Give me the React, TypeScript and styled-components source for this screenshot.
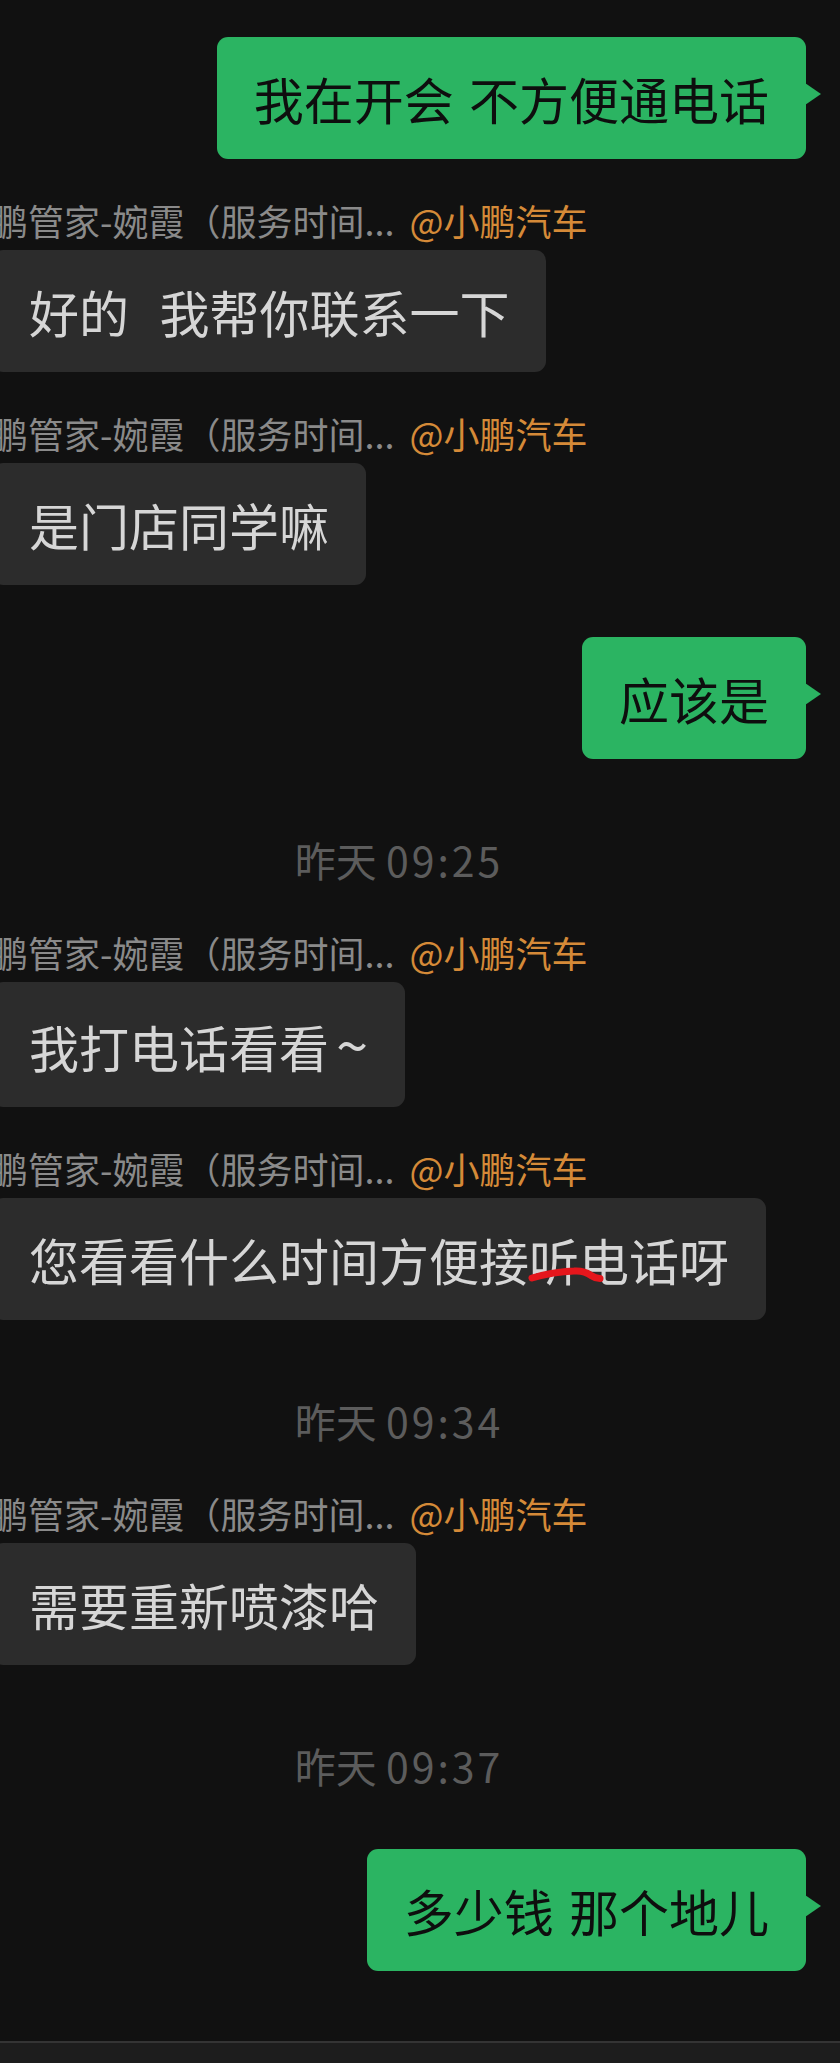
import React from "react"
import styled, { createGlobalStyle, css } from "styled-components"

const GlobalStyle = createGlobalStyle`
  html, body {
    margin: 0;
    padding: 0;
    background: #111111;
  }
  body {
    font-family: "Noto Sans CJK SC", "Noto Sans", sans-serif;
    overflow: hidden;
  }
`

const GREEN = "#2bb462"

const Screen = styled.div`
  width: 840px;
  height: 2063px;
  display: flex;
  flex-direction: column;
  overflow: hidden;
  background: #111111;
`

const ChatList = styled.div`
  flex: 1;
  display: flex;
  flex-direction: column;
  padding-top: 37px;

  & > *:first-child {
    margin-top: 0;
  }
`

const Row = styled.div<{ $out?: boolean }>`
  display: flex;
  flex-direction: column;
  align-items: ${(p) => (p.$out ? "flex-end" : "flex-start")};
  margin-top: ${(p) => (p.$out ? 52 : 39)}px;
  margin-left: ${(p) => (p.$out ? 0 : -8)}px;
  padding-right: ${(p) => (p.$out ? 34 : 0)}px;
`

const SenderName = styled.div`
  height: 44px;
  line-height: 44px;
  font-size: 36px;
  color: #8a8a8a;
  margin-bottom: 8px;
  white-space: nowrap;
`

const Org = styled.span`
  margin-left: 15px;
  color: #d58a38;
`

const Bubble = styled.div<{ $out?: boolean }>`
  position: relative;
  font-size: 50px;
  line-height: 70px;
  padding: 26px 37px;
  border-radius: 11px;
  white-space: pre;
  word-spacing: 4px;
  background: ${(p) => (p.$out ? GREEN : "#2c2c2c")};
  color: ${(p) => (p.$out ? "#0e0e0e" : "#d6d6d6")};

  ${(p) =>
    p.$out &&
    css`
      &::after {
        content: "";
        position: absolute;
        right: -15px;
        top: 46px;
        border-left: 16px solid ${GREEN};
        border-top: 11px solid transparent;
        border-bottom: 11px solid transparent;
      }
    `}
`

const Tilde = styled.span`
  margin-left: 7px;
  font-size: 58px;
  line-height: 70px;
`

const Marked = styled.span`
  position: relative;
`

const Scribble = styled.svg`
  position: absolute;
  left: 0;
  top: 0;
  pointer-events: none;
  overflow: visible;
`

const TimeStamp = styled.div`
  margin-top: 71px;
  margin-bottom: 3px;
  height: 58px;
  line-height: 58px;
  font-size: 41px;
  color: #5c5c5c;
  text-align: center;
  padding-right: 42px;
`

const Clock = styled.span`
  letter-spacing: 3px;
`

const InputBar = styled.div`
  height: 20px;
  border-top: 2px solid #343434;
  background: #1d1d1d;
`

const NAME = "鹏管家-婉霞（服务时间..."

const Incoming = ({ children }: { children: React.ReactNode }) => (
  <Row>
    <SenderName>
      {NAME}
      <Org>@小鹏汽车</Org>
    </SenderName>
    <Bubble>{children}</Bubble>
  </Row>
)

const Outgoing = ({ children }: { children: React.ReactNode }) => (
  <Row $out>
    <Bubble $out>{children}</Bubble>
  </Row>
)

const Time = ({ value }: { value: string }) => (
  <TimeStamp>
    昨天 <Clock>{value}</Clock>
  </TimeStamp>
)

export default function App() {
  return (
    <>
      <GlobalStyle />
      <Screen>
        <ChatList>
          <Outgoing>我在开会 不方便通电话</Outgoing>
          <Incoming>{"好的  我帮你联系一下"}</Incoming>
          <Incoming>是门店同学嘛</Incoming>
          <Outgoing>应该是</Outgoing>

          <Time value="09:25" />
          <Incoming>
            我打电话看看<Tilde>~</Tilde>
          </Incoming>
          <Incoming>
            您看看什么时间方便接
            <Marked>
              听
              <Scribble width="76" height="70" viewBox="0 0 76 70">
                <path
                  d="M3 55 C 15 51.5, 30 48.5, 45 48 C 52 47.5, 57 48.5, 62 52.5 C 65 54.5, 68 55.5, 71 55.5"
                  fill="none"
                  stroke="#e5161c"
                  strokeWidth="7"
                  strokeLinecap="round"
                />
              </Scribble>
            </Marked>
            电话呀
          </Incoming>

          <Time value="09:34" />
          <Incoming>需要重新喷漆哈</Incoming>

          <Time value="09:37" />
          <Outgoing>多少钱 那个地儿</Outgoing>
        </ChatList>
        <InputBar />
      </Screen>
    </>
  )
}
